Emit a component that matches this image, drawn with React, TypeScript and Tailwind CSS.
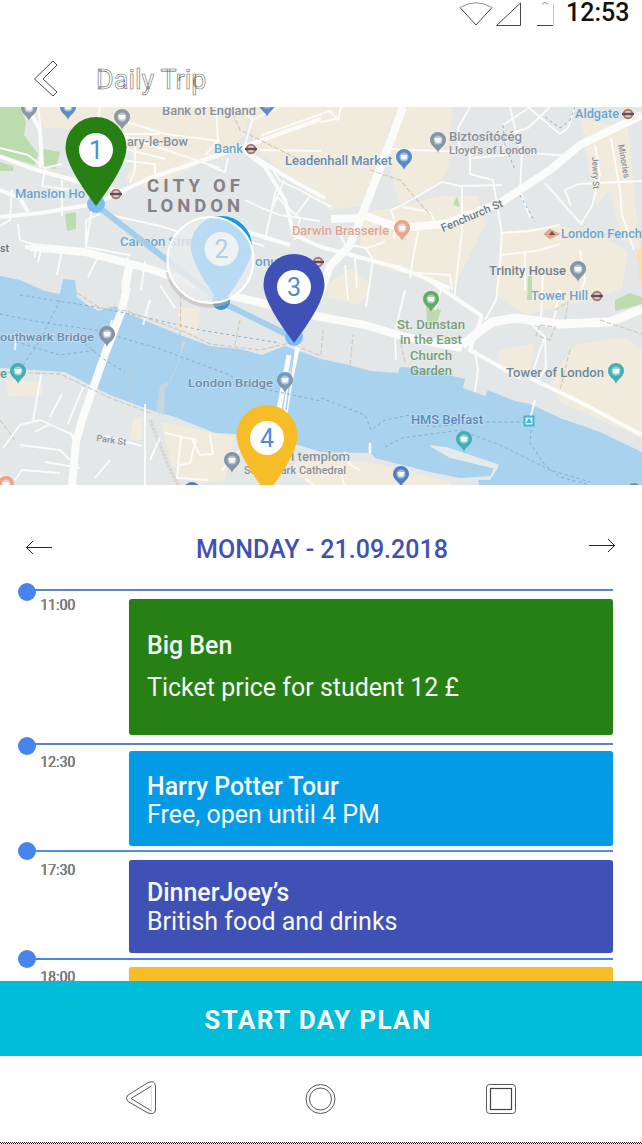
import React from "react";

type Label = { x: number; y: number; t: string; c?: string; s?: number; w: number; r?: number };

const GREY = "#7b858f";
const BLUE = "#5b9bcb";

const labels: Label[] = [
  { x: 162, y: 115, t: "Bank of England", s: 12, w: 94 },
  { x: 127, y: 146, t: "ary-le-Bow", s: 12, w: 61 },
  { x: 214, y: 153, t: "Bank", c: BLUE, w: 29 },
  { x: 285, y: 165, t: "Leadenhall Market", c: "#557fae", w: 107 },
  { x: 449, y: 141, t: "Biztosítócég", s: 12, w: 73 },
  { x: 449, y: 154, t: "Lloyd's of London", s: 10.5, w: 88 },
  { x: 575, y: 118, t: "Aldgate", c: BLUE, w: 44 },
  { x: 15, y: 198, t: "Mansion Ho", c: BLUE, w: 70 },
  { x: 120, y: 246, t: "Cannon Street", c: BLUE, w: 84 },
  { x: 255, y: 266, t: "onument", c: BLUE, w: 54 },
  { x: 292, y: 235, t: "Darwin Brasserie", c: "#e39a82", w: 97 },
  { x: 561, y: 238, t: "London Fench", c: BLUE, w: 81 },
  { x: 489, y: 275, t: "Trinity House", c: "#66717e", s: 12, w: 77 },
  { x: 531, y: 300, t: "Tower Hill", c: BLUE, w: 57 },
  { x: 0, y: 252, t: "st", c: "#555d66", s: 11, w: 9 },
  { x: 0, y: 341, t: "outhwark Bridge", c: "#64839c", s: 11.5, w: 94 },
  { x: 0, y: 378, t: "e", c: "#4a9099", w: 7 },
  { x: 188, y: 387, t: "London Bridge", c: "#64839c", s: 11.5, w: 85 },
  { x: 397, y: 329, t: "St. Dunstan", c: "#6b9367", w: 68 },
  { x: 400, y: 344, t: "in the East", c: "#6b9367", w: 62 },
  { x: 410, y: 360, t: "Church", c: "#6b9367", w: 42 },
  { x: 410, y: 375, t: "Garden", c: "#6b9367", w: 42 },
  { x: 506, y: 377, t: "Tower of London", c: "#5b7c8b", w: 98 },
  { x: 411, y: 424, t: "HMS Belfast", c: "#4e7fb6", w: 72 },
  { x: 291, y: 461, t: "i templom", s: 12, w: 59 },
  { x: 244, y: 474, t: "Southwark Cathedral", s: 10.5, w: 102 },
  { x: 96, y: 441, t: "Park St", s: 9, w: 30, r: 8 },
  { x: 443, y: 232, t: "Fenchurch St", c: "#606a73", s: 11, w: 66, r: -23 },
  { x: 592, y: 157, t: "Jewry St", s: 9, w: 32, r: 88 },
  { x: 618, y: 145, t: "Minories", s: 9, w: 34, r: 80 },
];

const minorRoads = [
  "M38 107L41 130L40 168M100 107L98 124L118 134L160 134M118 134L220 168M127 122L165 134L220 141",
  "M0 148L28 155L45 168L62 164M45 168L42 186L72 190M12 190L10 220L0 226M62 180V216M18 224L20 240L35 245L35 257M42 246L38 262M62 250L57 275",
  "M92 208L86 247L130 255M86 247V220L100 214M106 214L160 226L205 240M128 257L122 285M145 262L141 290M160 285L175 308M150 300L143 325",
  "M118 147L165 159M135 142V170L130 183M120 160L155 164L155 180M208 165L225 172L228 158M225 172L215 168M205 155L218 141L216 107",
  "M245 145L252 120L280 107M252 120L240 107M260 150L321 151M262 135L330 111M330 111L338 120L341 107M340 118L321 122M270 165L280 181L300 190L331 207",
  "M245 200L262 208L280 215L320 221M265 240L276 190M250 230L244 240L264 246M277 197L300 219M300 219L295 240M284 180L273 207M310 196L294 218",
  "M340 235L345 244L366 248L373 260L370 280M364 249L385 242M394 238L396 226L391 210L402 205L442 182M402 207L430 212L435 222L441 228M442 182L460 186L502 185",
  "M392 149L440 151L470 152L472 158L508 155M470 152V174L493 180L500 222L502 233L500 265L496 300L485 320M462 186V229L459 257L454 300",
  "M460 150L458 128L470 107M510 107L515 128L522 151L520 192L530 217M528 107L560 134L568 128L575 107M530 107L503 125M530 153L570 156M550 107L528 128L515 132L500 150",
  "M595 145L600 175L592 206L581 224L545 183M571 206L565 190L578 184L642 181M611 138L620 190L622 215L634 250M500 233L530 231L560 225M500 255L536 251L560 244M525 253V290",
  "M388 265L405 272L450 275L452 290M418 232L413 258L410 278M355 258L357 288M345 265L348 300M370 280L366 307M435 310L441 290L453 296M405 290L395 332L396 360",
  "M580 250L585 280L579 296M543 270L541 318M560 290L554 319M527 320L545 337L546 368L536 382M545 337L540 350L530 380M475 350L478 370L475 392",
  "M3 448L20 425L40 420L75 436M33 421L41 375M50 417L62 394M68 424L83 387M20 445L60 450L70 460M15 480L22 470L60 473M45 462L80 468M35 432L50 424",
  "M105 436L142 446M110 460L95 478M70 432L78 448M145 404V485M165 433L196 440M181 437L177 478L208 480M196 440L190 463L180 465M192 440L200 455L213 454L210 435M222 470L240 450M160 438L150 460",
  "M321 475L340 467L344 485M305 478L313 485M345 452L350 465L360 470M535 400L530 419M16 335L15 350M88 277L98 257M112 320L109 335",
];

const dotted = [
  "M20 295L90 306L140 316L200 330L280 343",
  "M0 314L40 322L95 330L160 349L230 375L240 384L321 401",
  "M10 340L60 355L96 350M60 300L40 340L20 370M80 340L105 360L125 372",
  "M321 398L365 415L371 430L385 420L410 415L430 427L485 422L530 422",
  "M385 447L402 438L460 430L500 445L550 470L590 482M531 430L530 443L545 465L560 477L590 485",
  "M503 125L505 145L515 170M545 117L560 128L570 120M575 107L570 120M520 195L535 222",
];

function MiniPin({ x, y, c }: { x: number; y: number; c: string }) {
  return (
    <g transform={`translate(${x} ${y})`}>
      <path d="M0 13C-1 8-8 6-8 0A8 8 0 0 1 8 0C8 6 1 8 0 13Z" fill={c} />
      <circle r="4.6" fill="#fff" opacity=".45" />
      <path d="M-3.5-2H3.5L2.5 2.5H-2.5Z" fill="#f6f8fa" />
    </g>
  );
}

function Tube({ x, y }: { x: number; y: number }) {
  return (
    <g>
      <circle cx={x} cy={y} r="4.2" fill="#e7cfc7" stroke="#b5766a" strokeWidth="2" />
      <path d={`M${x - 6} ${y}H${x + 6}`} stroke="#565066" strokeWidth="2.4" />
    </g>
  );
}

const PIN_SHAPE = "M0 0C-12-16-30.5-42-30.5-58.5A30.5 30.5 0 0 1 30.5-58.5C30.5-42 12-16 0 0Z";

function Pin({ x, y, n, c, disc = "#fdfefd", ink = "#4b8fd0" }: { x: number; y: number; n: string; c: string; disc?: string; ink?: string }) {
  return (
    <g transform={`translate(${x} ${y})`}>
      <path d={PIN_SHAPE} fill={c} />
      <circle cy="-56" r="17" fill={disc} />
      <text y="-47" textAnchor="middle" fontSize="25" fill={ink}>
        {n}
      </text>
    </g>
  );
}

function CityMap() {
  return (
    <svg viewBox="0 107 642 378" className="block h-[378px] w-full shrink-0 overflow-hidden font-['Roboto',sans-serif]">
      <defs>
        <clipPath id="touch">
          <circle cx="210.500" cy="260" r="42.500" />
        </clipPath>
      </defs>
      <rect y="107" width="642" height="378" fill="#e3e7e7" />
      <g fill="#f0ebdc">
        <path d="M30 107H250L245 135L215 160L140 178L120 130L45 128Z" />
        <path d="M140 150L210 158L150 190L125 180Z" />
        <path d="M248 107H395L384 150L366 205L330 210L275 165L255 150Z" />
        <path d="M395 107H452L450 165L440 182L400 204L385 155Z" />
        <path d="M364 212L392 208L440 196H478L485 225L455 285L380 268L360 245Z" />
        <path d="M500 232L560 226L605 238L628 252L622 288L590 300L525 315L496 296Z" />
        <path d="M580 118L628 128L640 250L622 240L610 190L596 206Z" />
        <path d="M326 285L350 268L373 286L360 305L328 298Z" />
        <path d="M575 345L625 337L642 350V438L560 402L550 380Z" />
        <path d="M500 350L535 343L530 370L515 376L497 365Z" />
        <path d="M178 308H200L198 335L178 330Z" />
        <path d="M5 380L43 382L42 395L8 396Z" />
        <path d="M133 418H142V440H130ZM160 422L235 436L225 480L195 485L172 465Z" />
        <path d="M300 456L370 462L450 482V485H310L290 470Z" />
        <path d="M0 470L15 485H0ZM178 440L192 443L190 478H178Z" />
      </g>
      <g fill="#bcdcae">
        <path d="M0 107H20L26 122L24 135L38 154L35 165L0 155ZM43 149L60 152L56 169L43 167ZM65 214L76 212V229L67 231ZM0 162L13 166V171H0Z" />
        <path d="M453 205L457 196L460 207ZM426 306L441 310L436 325H427ZM615 300L630 293L642 297V304L615 311ZM528 276H532V300H527Z" />
      </g>
      <path d="M638 250L642 246V283L639 280V262L636 258ZM639 480L642 478V485H639Z" fill="#fbe49a" />

      <path
        d="M0 276L20 280L45 291L60 294L63 279L75 280L77 297L86 304L98 311L115 306L127 313L180 335L210 346L240 349L262 355L285 346L296 350L321 359L345 364L371 371L398 373L400 367L420 368L465 379L463 388L485 396L488 390L515 401L530 404L560 418L600 432L642 452V485H479L478 480L490 480L495 468L492 476L460 478L430 472L375 458L371 453L321 452L298 445L235 434L215 433L175 417L150 410L110 395L90 385L65 372L0 368Z"
        fill="#a9d2ef"
      />
      <path d="M431 446L447 448L498 465L497 468L490 478L495 468L450 457Z" fill="#e5ebe9" stroke="#e5ebe9" strokeWidth="1.500" />
      <path d="M182 340L180 360L170 382L160 385L156 412L164 415L165 390L177 365L186 342Z" fill="#c6d7df" />
      <path d="M150 420L158 440L168 465L178 485" fill="none" stroke="#dad7d0" strokeWidth="3.500" strokeDasharray="3 1" />

      <g fill="none" stroke="#fbfbf9" strokeLinejoin="round">
        {minorRoads.map((d) => (
          <path key={d} d={d} strokeWidth="1.900" />
        ))}
        <path strokeWidth="4" d="M0 217L40 213L95 204L150 178L245 146L321 119M0 156L30 168L80 182L125 192M25 247L80 252L130 262L200 288L240 300M240 148L265 167L285 200L294 235L321 247L400 268L450 288M245 151L295 182L325 198" />
        <path strokeWidth="4" d="M225 225L290 245M28 107L40 130L42 165M0 190L20 198L28 212M482 316L470 350L520 378M426 278L482 316M530 378L580 402L642 435" />
        <path strokeWidth="8" d="M30 247L85 252L150 269L215 292L321 317L365 325L405 337L462 348M130 262L125 290" />
        <path strokeWidth="9" d="M462 345L492 322L515 318L560 324L610 322L642 309" />
        <path strokeWidth="8" d="M403 107L386 153L369 197L350 245L330 266L318 300M331 219L360 218M360 214L400 228L445 224L500 203L550 170L580 145L642 115" />
        <path strokeWidth="8" d="M127 287L122 310L105 354L82 420L76 442L72 485" />
        <path strokeWidth="5" d="M298 345L290 382L284 420M289 355L279 410" />
      </g>
      <path d="M294 350L286 410" stroke="#a9d2ef" strokeWidth="1.500" />
      <g fill="none" stroke="#84a9c2" strokeWidth=".9" strokeDasharray="3 3">
        {dotted.map((d) => (
          <path key={d} d={d} />
        ))}
      </g>
      <g fill="none" stroke="#d0c8bc" strokeWidth="1.100" strokeDasharray="5 2">
        <path d="M77 293L100 308L127 311L185 332L210 344L260 350L290 343L321 356M0 372L60 374L110 398L150 413M180 335L181 290M235 345L240 320M321 355L323 330M350 365L353 335M405 362L400 340M555 310L568 302L565 320M540 325L555 327L550 340L536 335Z" />
        <path d="M230 107L240 130L300 160M370 170L400 180L430 215M600 320L642 334M570 350L560 390M130 372V395M0 420L15 440" />
      </g>
      <path d="M370 443V453" stroke="#fff" strokeWidth="2.500" />

      <g opacity=".88">
        {labels.map((l) => (
          <text
            key={l.t}
            x={l.x}
            y={l.y}
            fontSize={l.s ?? 12}
            fontWeight="500"
            fill={l.c ?? GREY}
            textLength={l.w}
            lengthAdjust="spacingAndGlyphs"
            stroke="#f4f6f6"
            strokeWidth="1.500"
            strokeOpacity=".45"
            paintOrder="stroke"
            transform={l.r ? `rotate(${l.r} ${l.x} ${l.y})` : undefined}
          >
            {l.t}
          </text>
        ))}
      </g>
      <g fontSize="18.500" fontWeight="700" fill="#858187">
        <text x="147" y="192" textLength="93">CITY OF</text>
        <text x="147" y="212" textLength="93">LONDON</text>
      </g>

      <MiniPin x={29} y={108} c="#8b99a5" />
      <MiniPin x={68} y={107} c="#5f8ccb" />
      <MiniPin x={122} y={117} c="#8b99a5" />
      <MiniPin x={267} y={104} c="#5f8ccb" />
      <MiniPin x={404} y={157} c="#568bc8" />
      <MiniPin x={438} y={140} c="#8496a4" />
      <MiniPin x={402} y={228} c="#e9a48a" />
      <MiniPin x={578} y={269} c="#8496a4" />
      <MiniPin x={431} y={299} c="#63aa66" />
      <MiniPin x={107} y={334} c="#8293a3" />
      <MiniPin x={18} y={371} c="#42aeb5" />
      <MiniPin x={285} y={380} c="#7698ba" />
      <MiniPin x={616} y={371} c="#42aeb5" />
      <MiniPin x={464} y={439} c="#42aeb5" />
      <MiniPin x={232} y={460} c="#8496a4" />
      <MiniPin x={401} y={474} c="#4f7fc0" />
      <MiniPin x={6} y={484} c="#e9a48a" />
      <MiniPin x={192} y={490} c="#4f7fc0" />
      <MiniPin x={634} y={491} c="#7f8a98" />
      <Tube x={251} y={149} />
      <Tube x={628} y={114} />
      <Tube x={116} y={194} />
      <Tube x={597} y={296} />
      <Tube x={318} y={262} />
      <path d="M545 234L550 230L558 234L550 238Z" fill="#e9a48a" stroke="#e9a48a" strokeWidth="2" />
      <path d="M549 235L552 231L555 235Z" fill="#555" />
      <rect x="524.500" y="416.500" width="9" height="9" fill="#e7f6fb" stroke="#3fb3d9" strokeWidth="2" />
      <path d="M526 423L529 418L532 423Z" fill="#3fb3d9" />

      <path d="M96 205L221 302L294 338" fill="none" stroke="#a4cfec" strokeWidth="6" />
      <circle cx="96" cy="204" r="9" fill="#7abdf3" />
      <circle cx="221" cy="301" r="9" fill="#3d92c9" />
      <circle cx="294" cy="337" r="9" fill="#7abdf3" />
      <Pin x={96} y={206} n="1" c="#278014" />
      <path d={PIN_SHAPE} transform="translate(221.500 305)" fill="#149bdf" />
      <path d="M168 272A43 43 0 0 0 228 301" fill="none" stroke="#b9b2aa" strokeWidth="5" opacity=".5" />
      <circle cx="210.500" cy="260" r="43" fill="#e9eceb" fillOpacity=".82" />
      <g clipPath="url(#touch)">
        <Pin x={221.5} y={305} n="2" c="#b8dbf3" disc="#eff2f2" ink="#b3cfe2" />
      </g>
      <circle cx="210.500" cy="260" r="43" fill="none" stroke="#fff" strokeWidth="2.200" />
      <Pin x={294} y={343} n="3" c="#3f51b5" />
      <Pin x={267} y={494} n="4" c="#f7bd28" />
    </svg>
  );
}

type Entry = { time: string; row: string; line: string; dot: string; label: string; card: string; title?: string; text?: string; gap?: string };

const entries: Entry[] = [
  { time: "11:00", row: "h-[154px]", line: "bg-[#5c82c8]", dot: "-top-[6px]", label: "pt-[6px]", card: "mt-2 h-[136px] bg-[#278014] pt-[33px]", title: "Big Ben", text: "Ticket price for student 12 £", gap: "mt-[14px]" },
  { time: "12:30", row: "h-[107px]", line: "bg-[#5c82c8]", dot: "-top-[6px]", label: "pt-[9px]", card: "mt-1.5 h-[95px] bg-[#039be5] pt-[22px]", title: "Harry Potter Tour", text: "Free, open until 4 PM" },
  { time: "17:30", row: "h-[108px]", line: "bg-[#4d92d8]", dot: "-top-[8px]", label: "pt-[10px]", card: "mt-2 h-[93px] bg-[#3f51b5] pt-[19px]", title: "DinnerJoey’s", text: "British food and drinks", gap: "mt-px" },
  { time: "18:00", row: "h-[23px]", line: "bg-[#4784ee]", dot: "-top-[8px]", label: "pt-[9px]", card: "mt-[7px] h-[20px] bg-[#f7bd28]" },
];

function TimelineEntry({ e }: { e: Entry }) {
  return (
    <div className={`shrink-0 ${e.row}`}>
      <div className={`relative h-[2px] ${e.line}`}>
        <span className={`absolute -left-2 size-[18px] rounded-full bg-[#4784ee] ${e.dot}`} />
      </div>
      <div className="flex">
        <div className={`w-[103px] shrink-0 pl-[14px] text-[14px] leading-[16px] text-[#888] [text-shadow:0.5px_0_0_#333] ${e.label}`}>{e.time}</div>
        <div className={`w-[483.500px] rounded-[3px] pl-[18px] text-[25px] leading-[28px] text-[#f5f8f8] shadow-[0_0_1px_#8888] ${e.card}`}>
          {e.title && <div className="text-[24.900px] font-medium">{e.title}</div>}
          {e.text && <div className={e.gap ?? ""}>{e.text}</div>}
        </div>
      </div>
    </div>
  );
}

export default function App() {
  return (
    <div className="flex h-[1144px] w-[642px] flex-col overflow-hidden bg-white font-['Roboto',sans-serif] text-black">
      <div className="flex h-[30px] shrink-0 justify-end pr-[11px]">
        <svg viewBox="455 0 105 30" className="h-[30px] w-[105px]" fill="none" stroke="#333" strokeWidth=".9">
          <path d="M460 7.500L476 25L492 7.500" />
          <path d="M460 7.500Q476-2 492 7.500" stroke="#789" />
          <path d="M496.500 25.500H520.500V3Z" />
          <path d="M537 25.500H553" />
          <path d="M553.500 25V4" stroke="#bbb" />
          <path d="M542 4Q545 1 548 4" stroke="#789" />
        </svg>
        <div className="ml-[6px] w-[65px] whitespace-nowrap text-[25px] font-medium leading-[26px] text-[#111]">12:53</div>
      </div>
      <header className="flex h-[77px] shrink-0 pl-8">
        <svg viewBox="0 0 30 40" className="mt-[29px] h-10 w-[30px]" fill="none" stroke="#333" strokeWidth=".9">
          <path d="M21 2L25 6L11 20L25 33L21 37L2.500 20Z" />
        </svg>
        <h1 className="ml-[34px] mt-[34px] text-[27px] leading-[32px] text-white [-webkit-text-stroke:0.6px_#666]">Daily Trip</h1>
      </header>
      <CityMap />
      <div className="flex h-[104px] shrink-0 items-start justify-between pl-[25px] pr-[26px] pt-[50px]">
        <svg viewBox="0 0 28 28" className="size-7" fill="none" stroke="#222">
          <path d="M1 12.500H27M8 6L1.500 12.500L8 19" />
        </svg>
        <h2 className="ml-[3px] mt-px text-[25px] font-medium leading-[28px] text-[#3f51b5]">MONDAY - 21.09.2018</h2>
        <svg viewBox="0 0 28 28" className="size-7" fill="none" stroke="#222">
          <path d="M1 10.500H27M20 4L26.500 10.500L20 17" />
        </svg>
      </div>
      <main className="-mt-3 flex h-[404px] shrink-0 flex-col overflow-hidden pl-[26px] pr-[29px] pt-3">
        {entries.map((e) => (
          <TimelineEntry key={e.time} e={e} />
        ))}
      </main>
      <button className="h-[75px] shrink-0 bg-[#00bcd9] pr-[6px] pt-1 text-[26px] font-bold tracking-[1.400px] text-[#f3fbfc]">START DAY PLAN</button>
      <svg viewBox="0 1056 642 88" className="h-[88px] w-full shrink-0" fill="none" stroke="#444" strokeWidth=".9">
        <path d="M127.500 1095.500L148 1082.500Q155 1080 155.500 1086V1110Q155 1115 148 1113L128 1101.500Q125 1098.500 127.500 1095.500Z" />
        <path d="M151.500 1086L131 1098.500L151.500 1111" />
        <path d="M151.500 1086V1111" stroke="#ddd" />
        <circle cx="320.500" cy="1099" r="14.500" />
        <circle cx="320.500" cy="1099" r="11" />
        <rect x="486.500" y="1084.500" width="29" height="29" rx="3" />
        <rect x="490.500" y="1088.500" width="21" height="21" strokeWidth="1.200" />
        <path d="M0 1142.500H642" stroke="#111" strokeWidth="1" strokeDasharray="1 1" />
        <path d="M1 1143.500H642" stroke="#111" strokeWidth="1" strokeDasharray="1 1" />
      </svg>
    </div>
  );
}
